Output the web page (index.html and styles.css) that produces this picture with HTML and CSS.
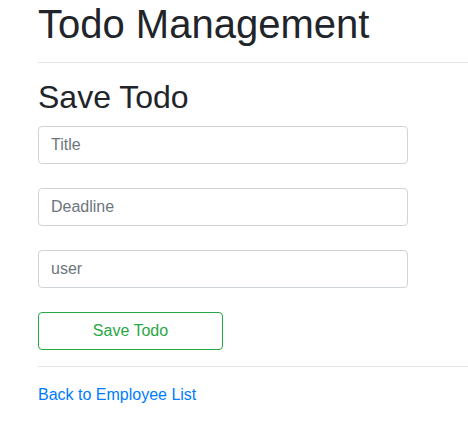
FILE: index.html
```html
<!DOCTYPE html>
<html lang="en">
<head>
<meta charset="utf-8">
<title>Todo Management</title>
<link rel="stylesheet" href="styles.css">
</head>
<body>
<div class="page">
  <h1 class="title">Todo Management</h1>
  <hr class="rule rule-top">
  <h2 class="subtitle">Save Todo</h2>
  <form class="todo-form">
    <input class="field" type="text" placeholder="Title">
    <input class="field" type="text" placeholder="Deadline">
    <input class="field" type="text" placeholder="user">
    <button class="btn-save" type="button">Save Todo</button>
  </form>
  <hr class="rule rule-bottom">
  <a class="back-link" href="#">Back to Employee List</a>
</div>
</body>
</html>
```

FILE: styles.css
```css
* { box-sizing: border-box; }
html, body {
  margin: 0;
  padding: 0;
  background: #fff;
}
body {
  font-family: "Liberation Sans", Arial, Helvetica, sans-serif;
  font-size: 16px;
  line-height: 1.5;
  color: #212529;
}
.page {
  padding-left: 38px;
}
.title {
  margin: 0;
  font-size: 40px;
  font-weight: 500;
  line-height: 48px;
}
.rule {
  border: 0;
  border-top: 1px solid rgba(0, 0, 0, 0.1);
  margin: 0;
}
.rule-top {
  margin-top: 14px;
  margin-bottom: 15px;
}
.subtitle {
  margin: 0 0 10px;
  font-size: 32px;
  font-weight: 500;
  line-height: 38px;
}
.todo-form {
  display: flex;
  flex-direction: column;
  align-items: flex-start;
  gap: 24px;
}
.field {
  display: block;
  width: 370px;
  height: 38px;
  padding: 6px 12px;
  font-family: inherit;
  font-size: 16px;
  line-height: 24px;
  color: #495057;
  background: #fff;
  border: 1px solid #ced4da;
  border-radius: 4px;
  outline: none;
}
.field::placeholder {
  color: #6c757d;
  opacity: 1;
}
.btn-save {
  width: 185px;
  height: 38px;
  padding: 6px 12px;
  font-family: inherit;
  font-size: 16px;
  line-height: 24px;
  color: #28a745;
  background: transparent;
  border: 1px solid #28a745;
  border-radius: 4px;
  cursor: pointer;
}
.rule-bottom {
  margin-top: 16px;
  margin-bottom: 16px;
}
.back-link {
  display: inline-block;
  color: #007bff;
  text-decoration: none;
  line-height: 24px;
}
```
